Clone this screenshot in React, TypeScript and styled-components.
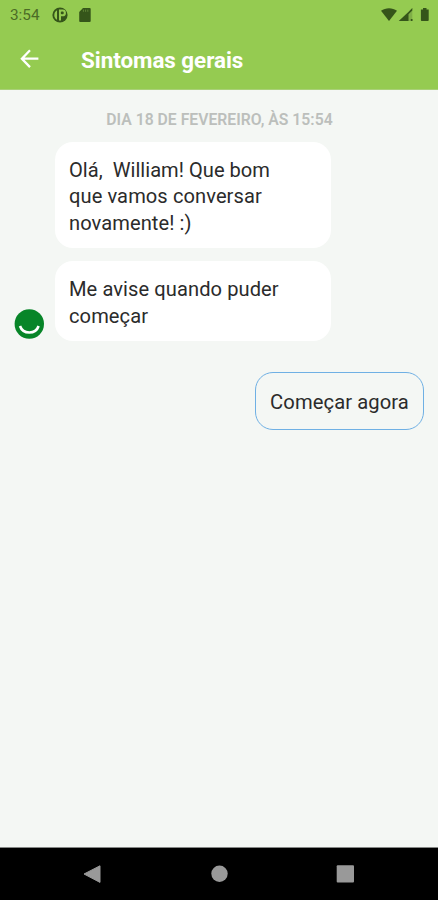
import React from "react";
import styled, { createGlobalStyle } from "styled-components";

const GlobalStyle = createGlobalStyle`
  * { box-sizing: border-box; }
  html, body { margin: 0; padding: 0; }
  body { font-family: Roboto, "Liberation Sans", sans-serif; }
  svg { display: block; flex: none; }
`;

const Screen = styled.div`
  display: flex;
  flex-direction: column;
  width: 438px;
  height: 900px;
  overflow: hidden;
  background: #f4f7f4;
`;

const Header = styled.header`
  flex: none;
  height: 90px;
  background: #95cb51;
  border-bottom: 1px solid #a9d078;
`;

const StatusBar = styled.div`
  display: flex;
  align-items: center;
  justify-content: space-between;
  height: 29px;
  padding: 0 8px 0 10px;
`;

const StatusGroup = styled.div`
  display: flex;
  align-items: center;
`;

const Clock = styled.span`
  width: 42px;
  font-size: 15.3px;
  line-height: 28px;
  color: #4c6b26;
`;

const AppBar = styled.div`
  display: flex;
  align-items: center;
  height: 60px;
  padding-left: 20px;
`;

const BackButton = styled.button`
  width: 61px;
  padding: 0;
  border: 0;
  background: none;
`;

const Title = styled.h1`
  margin: 1px 0 0;
  font-size: 22.4px;
  font-weight: 700;
  line-height: 26px;
  letter-spacing: -0.03px;
  color: #fff;
`;

const Chat = styled.main`
  flex: 1;
  display: flex;
  flex-direction: column;
  padding: 20px 14px 0 14px;
`;

const Timestamp = styled.div`
  height: 32px;
  padding-left: 1px;
  font-size: 15.75px;
  font-weight: 600;
  line-height: 20px;
  text-align: center;
  white-space: nowrap;
  color: #bcbfbc;
`;

const MessageRow = styled.div`
  display: flex;
  align-items: flex-end;
  margin-bottom: 13px;
`;

const AvatarSlot = styled.div`
  flex: none;
  width: 41px;
  padding-bottom: 2px;
`;

const Bubble = styled.div`
  width: 276px;
  padding: 15px 13px 12px 14px;
  border-radius: 18px;
  background: #fff;
  color: #2b2b2b;
  font-size: 20.1px;
  letter-spacing: 0.08px;
  line-height: 26.4px;
  white-space: pre-line;
`;

const Spaced = styled.span`
  white-space: pre;
  letter-spacing: 0.02px;
`;

const ReplyButton = styled.button`
  align-self: flex-end;
  width: 169px;
  height: 58px;
  margin-top: 18px;
  padding: 1px 0 0;
  border: 1px solid #6fb0e4;
  border-radius: 18px;
  background: transparent;
  color: #2b2b2b;
  font: 400 20.2px/26px Roboto, "Liberation Sans", sans-serif;
  letter-spacing: 0.08px;
  white-space: nowrap;
`;

const NavBar = styled.nav`
  flex: none;
  display: flex;
  justify-content: space-between;
  height: 53px;
  padding: 17px 82px 0 83px;
  border-top: 1px solid #858785;
  background: #000;
`;

const BrandStatusIcon = () => (
  <svg width="16" height="16" viewBox="0 0 16 16">
    <circle cx="8" cy="8" r="7.6" fill="#35551a" />
    <path d="M5 3.2v9.6C1.4 10.6 1.4 5.4 5 3.2z" fill="#95cb51" />
    <path d="M7 2.6h3.6a3.3 3.3 0 0 1 0 6.7H9v4.3H7z" fill="#95cb51" />
    <rect x="8.8" y="4.4" width="2.9" height="2.9" rx="1" fill="#35551a" />
  </svg>
);

const CardIcon = () => (
  <svg width="12" height="14" viewBox="0 0 12 14">
    <path d="M4 0h6.7a1 1 0 0 1 1 1v12a1 1 0 0 1-1 1H1.2a1 1 0 0 1-1-1V4z" fill="#35551a" />
    <path d="M4.4 1.6v2.2M6.6 1.6v2.2M8.8 1.6v2.2" stroke="#64893a" strokeWidth=".9" />
  </svg>
);

const CardSlot = styled.div`
  margin-left: 11px;
`;

const SystemIcons = () => (
  <svg width="50" height="16" viewBox="0 0 50 16">
    <path d="M1 3.7C5.5.3 12.5.3 17 3.7L9 14z" fill="#35551a" />
    <path d="M32.3 1v13H18.8z" fill="#7fae47" />
    <path d="M28.5 5v9h-9.7zM32.3 1v2.5l-3.8 3.8V5zM30.8 12h1.7v2h-1.7z" fill="#35551a" />
    <path d="M43 1h3.5v1.4h2.2v10.8a.8.8 0 0 1-.8.8h-6.2a.8.8 0 0 1-.8-.8V2.4H43z" fill="#35551a" />
  </svg>
);

const BackArrow = () => (
  <svg width="20" height="20" viewBox="0 0 20 20" fill="none" stroke="#fff" strokeWidth="2.3">
    <path d="M18.4 9.7H2.5M10 1.3 1.9 9.7l8.1 8.4" />
  </svg>
);

const Avatar = () => (
  <svg width="30" height="30" viewBox="0 0 30 30">
    <circle cx="15.3" cy="15" r="14.7" fill="#078528" />
    <path d="M6 17c3 8.7 15.6 8.7 18.6 0" fill="none" stroke="#fff" strokeWidth="2.6" />
  </svg>
);

export default function App() {
  return (
    <>
      <GlobalStyle />
      <Screen>
        <Header>
          <StatusBar>
            <StatusGroup>
              <Clock>3:54</Clock>
              <BrandStatusIcon />
              <CardSlot><CardIcon /></CardSlot>
            </StatusGroup>
            <SystemIcons />
          </StatusBar>
          <AppBar>
            <BackButton aria-label="Voltar"><BackArrow /></BackButton>
            <Title>Sintomas gerais</Title>
          </AppBar>
        </Header>
        <Chat>
          <Timestamp>DIA 18 DE FEVEREIRO, ÀS 15:54</Timestamp>
          <MessageRow>
            <AvatarSlot />
            <Bubble>
              <Spaced>Olá,  William! Que bom</Spaced>
              {"\nque vamos conversar\nnovamente! :)"}
            </Bubble>
          </MessageRow>
          <MessageRow>
            <AvatarSlot><Avatar /></AvatarSlot>
            <Bubble>{"Me avise quando puder\ncomeçar"}</Bubble>
          </MessageRow>
          <ReplyButton>Começar agora</ReplyButton>
        </Chat>
        <NavBar>
          <svg width="18" height="18" viewBox="0 0 18 18">
            <path d="M17 .8v16.6L1 9z" fill="#999" stroke="#999" strokeLinejoin="round" />
          </svg>
          <svg width="18" height="18" viewBox="0 0 18 18">
            <circle cx="9.5" cy="8.7" r="8.2" fill="#999" />
          </svg>
          <svg width="20" height="18" viewBox="0 0 20 18">
            <rect x=".7" y=".2" width="17.3" height="17.3" rx="1" fill="#999" />
          </svg>
        </NavBar>
      </Screen>
    </>
  );
}
